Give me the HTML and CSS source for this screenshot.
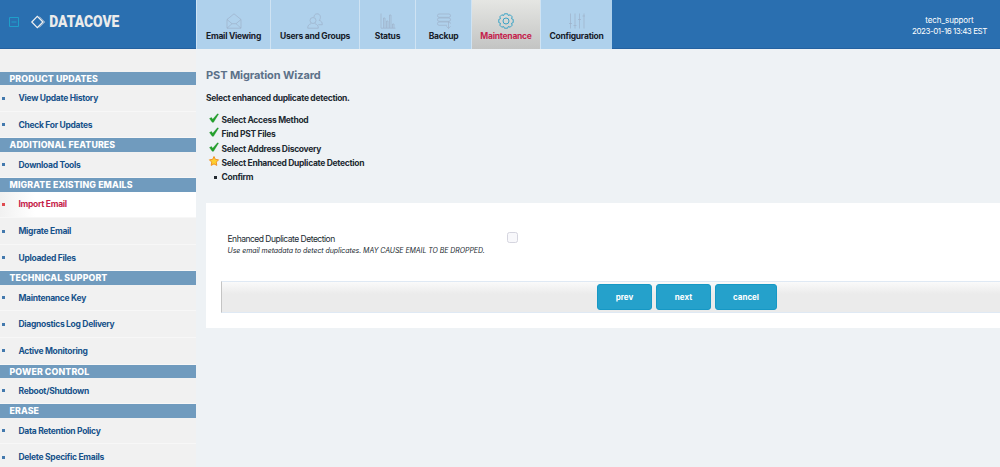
FILE: index.html
```html
<!DOCTYPE html>
<html lang="en">
<head>
    <meta charset="UTF-8">
    <title>DataCove - PST Migration Wizard</title>
    <link rel="stylesheet" href="styles.css">
</head>
<body>

    <header class="header">
        <div class="brand">
            <svg class="collapse" viewBox="0 0 10 10"><path d="M.5 .5h9v9h-9zM2.5 5h5"/></svg>
            <svg class="logo" viewBox="0 -4 130 24">
                <path class="logo-shade" d="M8.5 2.5l5.5 5.5-5.5 5.5M7.3 2.5l5.5 5.5-5.5 5.5"/>
                <path class="logo-mark" d="M6.3 2.4l5.6 5.6-5.6 5.6L.8 8z"/>
                <text x="18.3" y="13.4" textLength="70" lengthAdjust="spacingAndGlyphs">DATACOVE</text>
            </svg>
        </div>
        <nav class="tabs">
            <a class="tab tab-email">
                <svg viewBox="0 0 16 16"><path d="M1 6.5L8 .8l7 5.7v8.7H1zM1 6.5l5 4.2h4l5-4.2M1 15.2l5-4.5M15 15.2l-5-4.5"/></svg>
                <span>Email Viewing</span>
            </a>
            <a class="tab tab-users">
                <svg viewBox="0 0 16 16"><circle cx="6" cy="7.5" r="3"/><path d="M.7 15.2c0-3 1.4-3.8 3.5-4.6M7.8 10.6c2.1.8 3.5 1.6 3.5 4.6H.7M7 4.2C7 2 8.2.8 10.2.8c3.4 0 4.3 4.4 1.900 6.500 2.200.8 3.200 1.700 3.200 4.400h-4"/></svg>
                <span>Users and Groups</span>
            </a>
            <a class="tab tab-status">
                <svg viewBox="0 0 16 16"><path d="M1 .5v14.7h14.5M3.5 15V5H5v10M6.500 15V8H8v7M9.500 15V2H11v13M12.500 15v-4H14v4"/></svg>
                <span>Status</span>
            </a>
            <a class="tab tab-backup">
                <svg viewBox="0 0 16 16"><rect x="1.5" y="1" width="13" height="3.3" rx="1.6"/><rect x="1.5" y="5" width="13" height="3.3" rx="1.6"/><path d="M11 12.3H3.100a1.600 1.600 0 0 1 0-3.300h9.800a1.600 1.600 0 0 1 1.600 1.600M12.500 8.500v7M10.500 13.300l2 2.200 2-2.200"/></svg>
                <span>Backup</span>
            </a>
            <a class="tab tab-maintenance active">
                <svg viewBox="0 0 16 16"><circle cx="8" cy="8" r="3"/><path d="M6.400.8h3.200l.7 1.700 1.900-.7 2 2-.7 1.900 1.700.7v3.200l-1.700.7.7 1.900-2 2-1.900-.7-.7 1.700H6.400l-.7-1.700-1.900.7-2-2 .7-1.900-1.700-.7V6.400l1.700-.7-.7-1.900 2-2 1.900.7z"/></svg>
                <span>Maintenance</span>
            </a>
            <a class="tab tab-config">
                <svg viewBox="0 0 16 16"><path d="M1.500.5v15M6 .5v15M10.500.5v15M15 .5v15M0 10.500h3M4.500 12.500h3M9 6.500h3M13.500 3H16"/></svg>
                <span>Configuration</span>
            </a>
        </nav>
        <div class="session">
            <span>tech_support</span>
            <span class="clock">2023-01-16 13:43 EST</span>
        </div>
    </header>

    <div class="page">
        <aside class="sidebar">
            <h2>PRODUCT UPDATES</h2>
            <a>View Update History</a>
            <a>Check For Updates</a>
            <h2>ADDITIONAL FEATURES</h2>
            <a>Download Tools</a>
            <h2>MIGRATE EXISTING EMAILS</h2>
            <a class="active">Import Email</a>
            <a>Migrate Email</a>
            <a>Uploaded Files</a>
            <h2>TECHNICAL SUPPORT</h2>
            <a>Maintenance Key</a>
            <a>Diagnostics Log Delivery</a>
            <a>Active Monitoring</a>
            <h2>POWER CONTROL</h2>
            <a>Reboot/Shutdown</a>
            <h2>ERASE</h2>
            <a>Data Retention Policy</a>
            <a>Delete Specific Emails</a>
        </aside>

        <main class="content">
            <h1>PST Migration Wizard</h1>
            <p class="intro">Select enhanced duplicate detection.</p>
            <ul class="steps">
                <li><svg class="check" viewBox="0 0 10 10"><path d="M.5 5.5l2-1 1.200 1.800L8.500.8l1 .4-5 8.100H3.200z"/></svg>Select Access Method</li>
                <li><svg class="check" viewBox="0 0 10 10"><path d="M.5 5.5l2-1 1.200 1.800L8.500.8l1 .4-5 8.100H3.200z"/></svg>Find PST Files</li>
                <li><svg class="check" viewBox="0 0 10 10"><path d="M.5 5.5l2-1 1.200 1.800L8.500.8l1 .4-5 8.100H3.200z"/></svg>Select Address Discovery</li>
                <li><svg class="star" viewBox="0 0 10 10"><path d="M5 .5l1.400 2.900 3.200.4-2.300 2.300.5 3.300L5 7.900 2.200 9.400l.5-3.300L.4 3.800l3.200-.4z"/></svg>Select Enhanced Duplicate Detection</li>
                <li><i class="dot"></i>Confirm</li>
            </ul>

            <section class="panel">
                <div class="option">
                    <label for="dedupe">Enhanced Duplicate Detection<em>Use email metadata to detect duplicates. MAY CAUSE EMAIL TO BE DROPPED.</em></label>
                    <input type="checkbox" id="dedupe">
                </div>
                <div class="actions">
                    <button>prev</button>
                    <button>next</button>
                    <button class="cancel">cancel</button>
                </div>
            </section>
        </main>
    </div>

</body>
</html>
```
FILE: styles.css
```css
* {
    box-sizing: border-box;
}
body {
    margin: 0;
    height: 467px;
    overflow: hidden;
    font-family: Inter, Roboto, sans-serif;
    font-size: 8.5px;
    letter-spacing: -.3px;
    color: #222a31;
    background-color: #eef2f5;
}

/* Header */
.header {
    display: flex;
    height: 49px;
    background-color: #2a6fb0;
    border-bottom: 1px solid #2461a0;
}
.brand {
    display: flex;
    width: 196px;
    padding: 10px 0 0 9px;
    gap: 12px;
}
.collapse {
    width: 10px;
    height: 10px;
    margin-top: 7px;
    fill: none;
    stroke: #1f9fca;
}
.logo {
    width: 130px;
    height: 24px;
    overflow: visible;
    fill: none;
    letter-spacing: 0;
}
.logo-mark {
    stroke: #f2f2f2;
    stroke-width: 1.2;
}
.logo-shade {
    stroke: #9bb2cb;
    stroke-width: .8;
}
.logo text {
    fill: #ebebeb;
    font-family: Roboto, sans-serif;
    font-size: 16.5px;
    font-weight: 900;
}
.tabs {
    display: flex;
    height: 49px;
}
.tab {
    display: flex;
    flex-direction: column;
    align-items: center;
    padding-top: 13px;
    gap: 2px;
    font-weight: 700;
    letter-spacing: -.25px;
    line-height: 11px;
    white-space: nowrap;
    color: #17202a;
    background-color: #afd1ec;
    border-left: 1px solid #cfe3f3;
}
.tab svg {
    width: 16px;
    height: 16px;
    fill: none;
    stroke: #9db2ca;
    stroke-width: .7;
}
.tab-email { width: 74px; }
.tab-users { width: 89px; }
.tab-status { width: 56px; }
.tab-backup { width: 56px; }
.tab-maintenance { width: 69px; }
.tab-config { width: 72px; }
.tab.active {
    color: #c51f4c;
    background: linear-gradient(#e5e6e3, #c3c4c3);
}
.tab.active svg {
    stroke: #38a3c6;
    stroke-width: 1;
}
.session {
    display: flex;
    flex-direction: column;
    align-items: center;
    width: 75px;
    margin: 15px 13px 0 auto;
    line-height: 11px;
    color: #fff;
    font-size: 8px;
    letter-spacing: -.1px;
    white-space: nowrap;
}
.clock {
    letter-spacing: -.45px;
}

/* Sidebar */
.page {
    display: flex;
}
.sidebar {
    width: 196px;
    height: 418px;
    padding-top: 23px;
    overflow: hidden;
    background-color: #f1f1f1;
}
.sidebar h2 {
    height: 13.3px;
    margin: 0;
    padding-left: 9.5px;
    font-size: 8.8px;
    font-weight: 800;
    letter-spacing: .12px;
    line-height: 13px;
    color: #fff;
    background-color: #709bbe;
}
.sidebar a {
    display: flex;
    align-items: center;
    height: 26.6px;
    padding-left: 2px;
    font-weight: 700;
    color: #17528a;
    border-bottom: 1px solid #f7f7f7;
}
.sidebar a::before {
    content: "";
    width: 3px;
    height: 3px;
    margin-right: 13.5px;
    background-color: #4379ad;
}
.sidebar a.active {
    color: #c51f4c;
    background: linear-gradient(to right, #f1f1f1, #fff 35px);
}
.sidebar a.active::before {
    background-color: #df4a50;
}

/* Wizard */
.content {
    flex: 1;
    padding: 19px 0 0 10px;
}
h1 {
    margin: 0;
    font-size: 11px;
    font-weight: 700;
    letter-spacing: -.1px;
    line-height: 14px;
    color: #5c7189;
}
.intro {
    margin: 11px 0 9px;
    font-weight: 700;
    line-height: 11px;
}
.steps {
    margin: 0;
    padding: 0 0 0 3px;
    list-style: none;
    font-weight: 700;
    line-height: 14.3px;
}
.steps li {
    display: flex;
    height: 14.3px;
}
.steps svg {
    width: 10px;
    height: 10px;
    margin-right: 2.5px;
}
.check {
    fill: #24a32c;
    stroke: #168021;
    stroke-width: .3;
}
.star {
    overflow: visible;
    fill: #fdd02f;
    stroke: #ee8b1c;
    stroke-width: .9;
}
.dot {
    width: 3px;
    height: 3px;
    margin: 6px 4.5px 0 5px;
    background-color: #222a31;
}
.panel {
    height: 125px;
    margin-top: 19px;
    padding: 29px 0 0 15px;
    background-color: #fff;
}
.option {
    display: flex;
    height: 49px;
    padding-left: 6.5px;
}
.option label {
    width: 279px;
    padding-top: 1px;
    line-height: 12px;
    letter-spacing: -.5px;
    white-space: nowrap;
}
.option em {
    display: block;
    font-size: 7px;
    letter-spacing: -.06px;
}
.option input {
    appearance: none;
    width: 11px;
    height: 11px;
    margin: 0;
    border: 1px solid #d5d5df;
    border-radius: 2.5px;
    background-color: #f8f8fb;
}
.actions {
    display: flex;
    gap: 4px;
    height: 32px;
    padding: 2px 0 0 375px;
    border: solid #dfe9f4;
    border-width: 1px 0 1px 1px;
    border-left-color: #c4c4c4;
    background: linear-gradient(#fafafa, #ebebeb 40%);
}
button {
    width: 55px;
    height: 26px;
    padding: 0;
    border: 1px solid #1698c5;
    border-radius: 3px;
    font-family: inherit;
    font-size: 8px;
    font-weight: 700;
    color: #fff;
    background-color: #25a1cb;
}
.cancel {
    width: 62px;
}
```
